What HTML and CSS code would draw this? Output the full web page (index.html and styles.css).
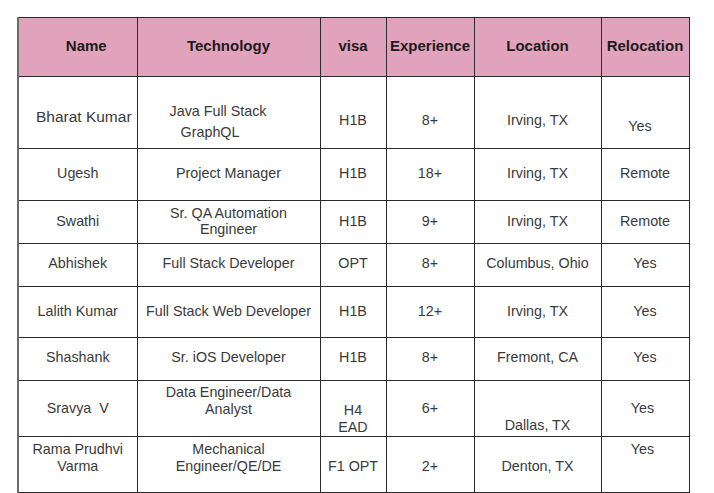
FILE: index.html
```html
<!DOCTYPE html>
<html lang="en">
<head>
<meta charset="utf-8">
<title>Consultants</title>
<link rel="stylesheet" href="styles.css">
</head>
<body>
<table class="hotlist">
  <colgroup>
    <col class="c-name"><col class="c-tech"><col class="c-visa"><col class="c-exp"><col class="c-loc"><col class="c-rel">
  </colgroup>
  <thead>
    <tr class="h-head">
      <th class="th-name">Name</th>
      <th>Technology</th>
      <th>visa</th>
      <th>Experience</th>
      <th>Location</th>
      <th>Relocation</th>
    </tr>
  </thead>
  <tbody>
    <tr class="h-r1">
      <td class="big pt10">Bharat Kumar</td>
      <td class="tall pt18"><div class="l1">Java Full Stack</div><div class="l2">GraphQL</div></td>
      <td class="pt16">H1B</td>
      <td class="pt16">8+</td>
      <td class="pt16">Irving, TX</td>
      <td class="pt28 pr10">Yes</td>
    </tr>
    <tr class="h-r2">
      <td class="pb2">Ugesh</td>
      <td class="pb2">Project Manager</td>
      <td class="pb2">H1B</td>
      <td class="pb2">18+</td>
      <td class="pb2">Irving, TX</td>
      <td class="pb2">Remote</td>
    </tr>
    <tr class="h-r3">
      <td class="pb2">Swathi</td>
      <td class="pb2">Sr. QA Automation<br>Engineer</td>
      <td class="pb2">H1B</td>
      <td class="pb2">9+</td>
      <td class="pb2">Irving, TX</td>
      <td class="pb2">Remote</td>
    </tr>
    <tr class="h-r4">
      <td class="pb4">Abhishek</td>
      <td class="pb4">Full Stack Developer</td>
      <td class="pb4">OPT</td>
      <td class="pb4">8+</td>
      <td class="pb4">Columbus, Ohio</td>
      <td class="pb4">Yes</td>
    </tr>
    <tr class="h-r5">
      <td class="pb2">Lalith Kumar</td>
      <td class="pb2">Full Stack Web Developer</td>
      <td class="pb2">H1B</td>
      <td class="pb2">12+</td>
      <td class="pb2">Irving, TX</td>
      <td class="pb2">Yes</td>
    </tr>
    <tr class="h-r6">
      <td class="pb4">Shashank</td>
      <td class="pb4">Sr. iOS Developer</td>
      <td class="pb4">H1B</td>
      <td class="pb4">8+</td>
      <td class="pb4">Fremont, CA</td>
      <td class="pb4">Yes</td>
    </tr>
    <tr class="h-r7">
      <td>Sravya&nbsp; V</td>
      <td class="pb16">Data Engineer/Data<br>Analyst</td>
      <td class="pt20">H4<br>EAD</td>
      <td>6+</td>
      <td class="pt34">Dallas, TX</td>
      <td class="pr5">Yes</td>
    </tr>
    <tr class="h-r8">
      <td class="pb14">Rama Prudhvi<br>Varma</td>
      <td class="pb14">Mechanical<br>Engineer/QE/DE</td>
      <td class="pt3">F1 OPT</td>
      <td class="pt3">2+</td>
      <td class="pt3">Denton, TX</td>
      <td class="pb31 pr5">Yes</td>
    </tr>
  </tbody>
</table>
</body>
</html>
```
FILE: styles.css
```css
html, body {
  margin: 0;
  padding: 0;
  background: #ffffff;
}

body {
  font-family: "Liberation Sans", Arial, sans-serif;
  color: #3a3a3a;
}

.hotlist {
  margin: 17px 0 0 17px;
  border-collapse: collapse;
  table-layout: fixed;
  width: 672px;
}

.c-name { width: 119px; }
.c-tech { width: 183px; }
.c-visa { width: 66px; }
.c-exp  { width: 88px; }
.c-loc  { width: 127px; }
.c-rel  { width: 88px; }

.hotlist th,
.hotlist td {
  border: 1px solid #2a2a2a;
  padding: 0;
  text-align: center;
  vertical-align: middle;
  white-space: nowrap;
}

.hotlist th {
  background: #e0a3bb;
  color: #1c1c1c;
  font-weight: bold;
  font-size: 15px;
  padding-bottom: 4px;
}

.hotlist tr > :first-child {
  border-left: 2px solid #6b6b6b;
}

.hotlist .th-name {
  padding-left: 17px;
}

.hotlist td {
  font-size: 14.3px;
  line-height: 16.5px;
}

.h-head { height: 59px; }
.h-r1 { height: 72px; }
.h-r2 { height: 52px; }
.h-r3 { height: 43px; }
.h-r4 { height: 43px; }
.h-r5 { height: 51px; }
.h-r6 { height: 43px; }
.h-r7 { height: 56px; }
.h-r8 { height: 56px; }

.hotlist td.big {
  font-size: 15.5px;
  padding-left: 12px;
}

.hotlist td.tall {
  line-height: 21px;
}

.l1 { padding-right: 21px; }
.l2 { padding-right: 37px; }

.hotlist td.pt3  { padding-top: 3px; }
.hotlist td.pt10 { padding-top: 10px; }
.hotlist td.pt16 { padding-top: 16px; }
.hotlist td.pt18 { padding-top: 18px; }
.hotlist td.pt20 { padding-top: 20px; }
.hotlist td.pt28 { padding-top: 28px; }
.hotlist td.pt34 { padding-top: 34px; }
.hotlist td.pb2  { padding-bottom: 2px; }
.hotlist td.pb4  { padding-bottom: 4px; }
.hotlist td.pb14 { padding-bottom: 14px; }
.hotlist td.pb16 { padding-bottom: 16px; }
.hotlist td.pb31 { padding-bottom: 31px; }
.hotlist td.pr5  { padding-right: 5px; }
.hotlist td.pr10 { padding-right: 10px; }
```
